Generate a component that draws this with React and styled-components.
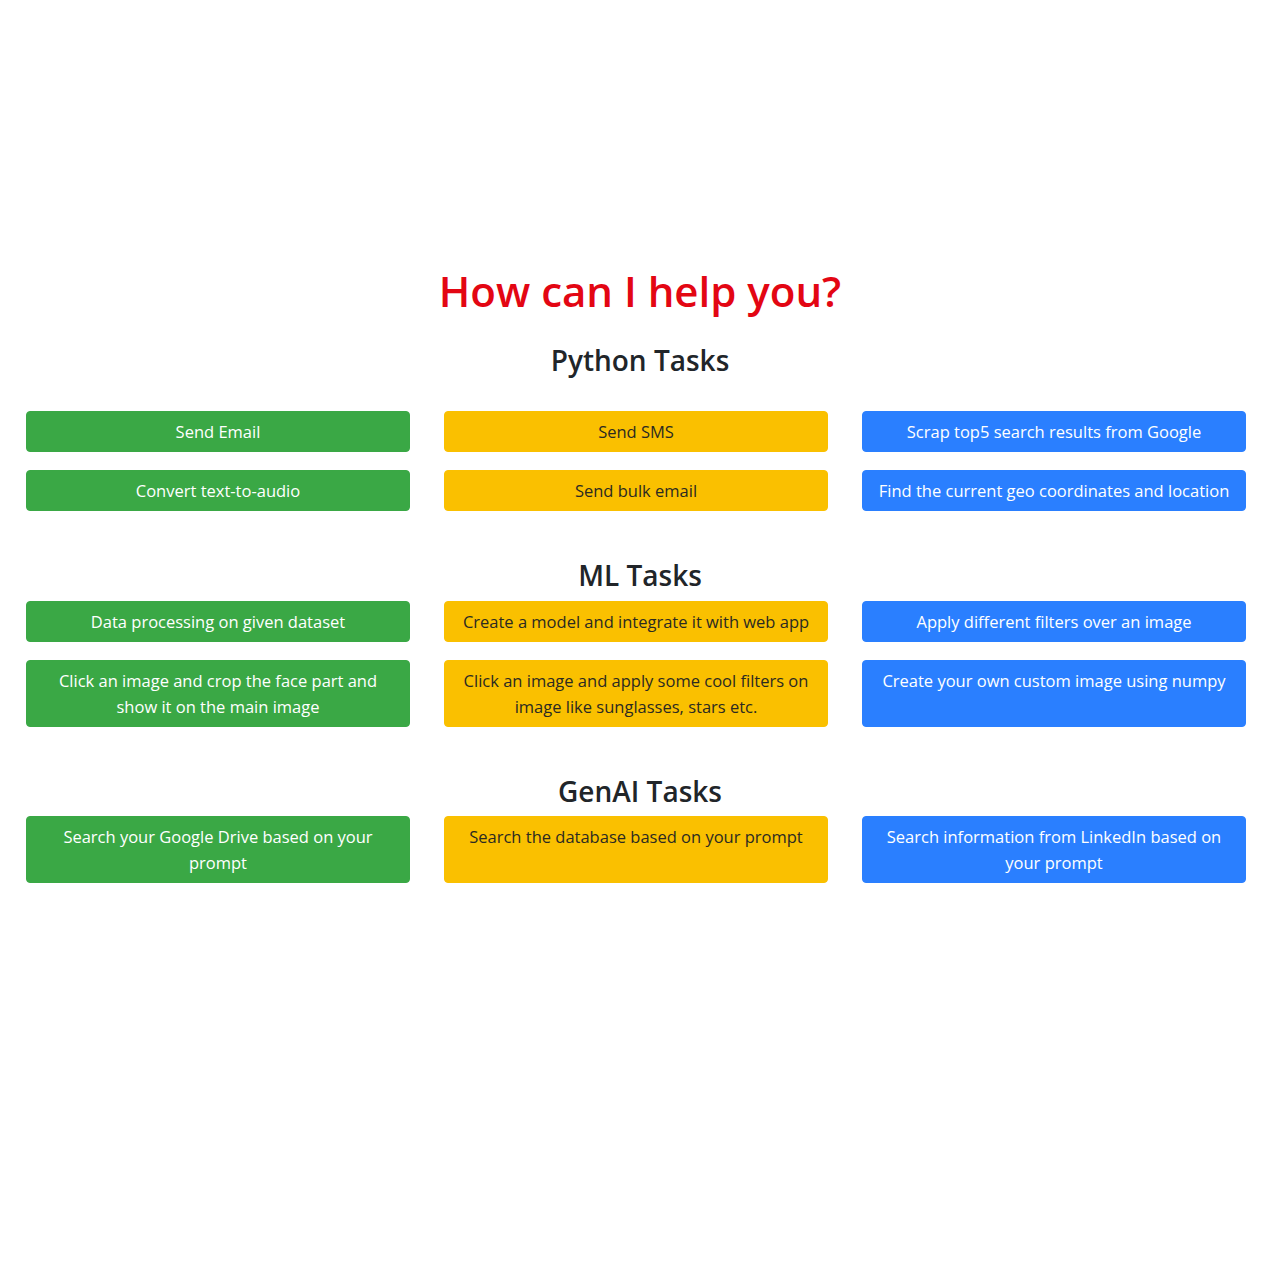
import React from "react";
import styled, { createGlobalStyle } from "styled-components";

const GlobalStyle = createGlobalStyle`
  body {
    margin: 0;
    background: #ffffff;
    font-family: "Open Sans", "Noto Sans", sans-serif;
  }
`;

const sections = [
  {
    title: "Python Tasks",
    gapAbove: 25,
    gapBelow: 33,
    rows: [
      ["Send Email", "Send SMS", "Scrap top5 search results from Google"],
      ["Convert text-to-audio", "Send bulk email", "Find the current geo coordinates and location"],
    ],
  },
  {
    title: "ML Tasks",
    gapAbove: 46,
    gapBelow: 8,
    rows: [
      ["Data processing on given dataset", "Create a model and integrate it with web app", "Apply different filters over an image"],
      [
        "Click an image and crop the face part and show it on the main image",
        "Click an image and apply some cool filters on image like sunglasses, stars etc.",
        "Create your own custom image using numpy",
      ],
    ],
  },
  {
    title: "GenAI Tasks",
    gapAbove: 46,
    gapBelow: 7,
    rows: [
      [
        "Search your Google Drive based on your prompt",
        "Search the database based on your prompt",
        "Search information from LinkedIn based on your prompt",
      ],
    ],
  },
];

const variants = ["success", "warning", "primary"];

function App() {
  return (
    <>
      <GlobalStyle />
      <Page>
        <Title>How can I help you?</Title>
        {sections.map((s) => (
          <Section key={s.title}>
            <Heading $above={s.gapAbove} $below={s.gapBelow}>
              {s.title}
            </Heading>
            <Grid>
              {s.rows.flat().map((label, i) => (
                <TaskButton key={label} $variant={variants[i % 3]}>
                  {label}
                </TaskButton>
              ))}
            </Grid>
          </Section>
        ))}
      </Page>
    </>
  );
}

const Page = styled.div`
  padding-top: 264px;
  padding-bottom: 300px;
  display: flex;
  flex-direction: column;
  align-items: center;
`;

const Title = styled.h1`
  margin: 0;
  font-size: 42px;
  line-height: 53px;
  font-weight: 600;
  color: #e30613;
  text-align: center;
`;

const Section = styled.section`
  width: 100%;
  display: flex;
  flex-direction: column;
  align-items: center;
`;

const Heading = styled.h3`
  margin: ${(p) => p.$above}px 0 ${(p) => p.$below}px;
  font-size: 28px;
  line-height: 36px;
  font-weight: 600;
  color: #212529;
  text-align: center;
`;

const Grid = styled.div`
  box-sizing: border-box;
  width: 100%;
  padding-left: 26px;
  display: grid;
  grid-template-columns: repeat(3, 384px);
  column-gap: 34px;
  row-gap: 18px;
`;

const colors = {
  success: { bg: "#3aa845", fg: "#ffffff" },
  warning: { bg: "#fac000", fg: "#2b2a22" },
  primary: { bg: "#2a7fff", fg: "#ffffff" },
};

const TaskButton = styled.button`
  box-sizing: border-box;
  width: 100%;
  min-height: 41px;
  padding: 7px 12px 6px;
  border: 1px solid ${(p) => colors[p.$variant].bg};
  border-radius: 4px;
  background: ${(p) => colors[p.$variant].bg};
  color: ${(p) => colors[p.$variant].fg};
  font-family: "Open Sans", "Noto Sans", sans-serif;
  font-size: 16.5px;
  line-height: 26px;
  text-align: center;
  display: flex;
  align-items: flex-start;
  justify-content: center;
  cursor: pointer;
`;

export default App;
